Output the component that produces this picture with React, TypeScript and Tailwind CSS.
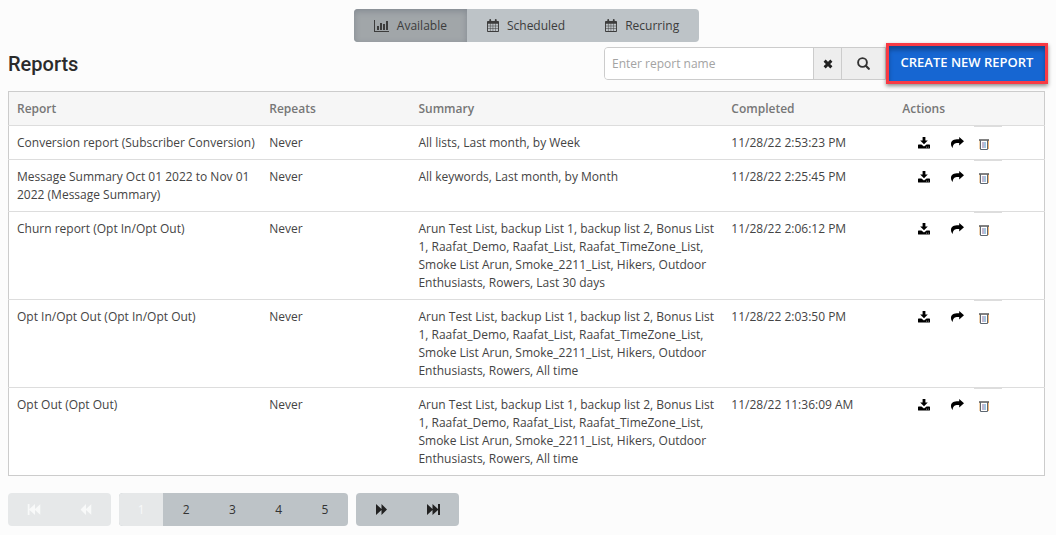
import { useState } from "react";
import type { ReactNode } from "react";
import clsx from "clsx";

interface Report {
  name: string;
  repeats: string;
  summary: string;
  completed: string;
}

const LISTS =
  "Arun Test List, backup List 1, backup list 2, Bonus List 1, Raafat_Demo, Raafat_List, Raafat_TimeZone_List, Smoke List Arun, Smoke_2211_List, Hikers, Outdoor Enthusiasts, Rowers";

const REPORTS: Report[] = [
  { name: "Conversion report (Subscriber Conversion)", repeats: "Never", summary: "All lists, Last month, by Week", completed: "11/28/22 2:53:23 PM" },
  { name: "Message Summary Oct 01 2022 to Nov 01 2022 (Message Summary)", repeats: "Never", summary: "All keywords, Last month, by Month", completed: "11/28/22 2:25:45 PM" },
  { name: "Churn report (Opt In/Opt Out)", repeats: "Never", summary: `${LISTS}, Last 30 days`, completed: "11/28/22 2:06:12 PM" },
  { name: "Opt In/Opt Out (Opt In/Opt Out)", repeats: "Never", summary: `${LISTS}, All time`, completed: "11/28/22 2:03:50 PM" },
  { name: "Opt Out (Opt Out)", repeats: "Never", summary: `${LISTS}, All time`, completed: "11/28/22 11:36:09 AM" },
];

const COLUMNS = [
  { label: "Report", width: "w-[24.4%]" },
  { label: "Repeats", width: "w-[14.4%]" },
  { label: "Summary", width: "w-[30.2%]" },
  { label: "Completed", width: "w-[16.5%]" },
  { label: "Actions", width: "w-[14.5%]" },
];

function ChartIcon() {
  return (
    <svg viewBox="0 0 15 12" className="h-3 w-[15px]" fill="currentColor" aria-hidden="true">
      <path d="M0 0h1v11h14v1H0zM3 6h2v4H3zM6 3h2v7H6zM9 4h2v6H9zM12 1h2v9h-2z" />
    </svg>
  );
}

function CalendarIcon() {
  return (
    <svg viewBox="0 0 13 14" className="h-[13px] w-3" aria-hidden="true">
      <path
        fill="currentColor"
        fillRule="evenodd"
        d="M2.5 2V1a1 1 0 0 1 2 0v1h4V1a1 1 0 0 1 2 0v1H12a1 1 0 0 1 1 1v10a1 1 0 0 1-1 1H1a1 1 0 0 1-1-1V3a1 1 0 0 1 1-1zM1 5.2v2h2.2v-2zm2.7 0v2h2.5v-2zm3 0v2h2.5v-2zm3 0v2H12v-2zM1 7.8v2.4h2.2V7.8zm2.7 0v2.4h2.5V7.8zm3 0v2.4h2.5V7.8zm3 0v2.4H12V7.8zM1 10.8V13h2.2v-2.2zm2.7 0V13h2.5v-2.2zm3 0V13h2.5v-2.2zm3 0V13H12v-2.2z"
      />
    </svg>
  );
}

function ClearIcon() {
  return (
    <svg viewBox="0 0 10 10" className="h-[10px] w-[10px]" aria-hidden="true">
      <path d="M1.6 1.6l6.8 6.8M8.4 1.6L1.6 8.4" stroke="currentColor" strokeWidth="2.9" />
    </svg>
  );
}

function SearchIcon() {
  return (
    <svg viewBox="0 0 13 13" className="h-[13px] w-[13px]" fill="none" stroke="currentColor" aria-hidden="true">
      <circle cx="5.5" cy="5.5" r="4.4" strokeWidth="1.9" />
      <path d="M8.8 8.8l3 3" strokeWidth="2.2" strokeLinecap="round" />
    </svg>
  );
}

function DownloadIcon() {
  return (
    <svg viewBox="0 0 12 12" className="h-3 w-3" fill="currentColor" aria-hidden="true">
      <path d="M4.6 0h2.8v3.4h2.4L6 7.2 2.2 3.4h2.4z" />
      <path fillRule="evenodd" d="M.6 7.6h2.8L6 9.6l2.6-2h2.8a.6.6 0 0 1 .6.6v2.7a.6.6 0 0 1-.6.6H.6a.6.6 0 0 1-.6-.6V8.2a.6.6 0 0 1 .6-.6zM8.3 9.8v.6h.7v-.6zm1.6 0v.6h.7v-.6z" />
    </svg>
  );
}

function ShareIcon() {
  return (
    <svg viewBox="0 0 13 11" className="h-[11px] w-[13px]" fill="currentColor" aria-hidden="true">
      <path d="M8.2 0L13 4.2 8.2 8.4V6.1C4.5 5.8 1.9 6.4 1.7 11 .2 9.2 0 8 0 6.8 0 3.2 3 2.1 8.2 2.2z" />
    </svg>
  );
}

function TrashIcon() {
  return (
    <svg viewBox="0 0 10 11" className="h-[11px] w-[10px]" fill="none" aria-hidden="true">
      <path d="M.5 1v9" stroke="#f0d4b0" />
      <path d="M9.5 1v9" stroke="#f0b878" />
      <path d="M0 1h10" stroke="#4d4d4d" strokeWidth="1.4" />
      <path d="M1.5 1v9.5h7V1" stroke="#5d6670" />
      <path d="M4 3v6" stroke="#8a6f9e" />
      <path d="M6 3v6" stroke="#4b8fc4" />
    </svg>
  );
}

function ForwardIcon() {
  return (
    <svg viewBox="0 0 11 11" className="h-[11px] w-[11px]" fill="currentColor" aria-hidden="true">
      <path d="M0 0l5.5 5V0L11 5.500 5.500 11V6L0 11z" />
    </svg>
  );
}

function FastForwardIcon() {
  return (
    <svg viewBox="0 0 13 11" className="h-[11px] w-[13px]" fill="currentColor" aria-hidden="true">
      <path d="M0 0l5.500 5V0L11 5V0h2v11h-2V6l-5.500 5V6L0 11z" />
    </svg>
  );
}

const TABS: { label: string; icon: ReactNode }[] = [
  { label: "Available", icon: <ChartIcon /> },
  { label: "Scheduled", icon: <CalendarIcon /> },
  { label: "Recurring", icon: <CalendarIcon /> },
];

export default function App() {
  const [tab, setTab] = useState("Available");
  const [query, setQuery] = useState("");
  const [page, setPage] = useState(1);

  const atStart = page === 1;
  const moveButton = "flex w-[51px] grow items-center justify-center";

  return (
    <div className="min-h-screen bg-[#fcfcfc] pb-2 pl-2 font-['Open_Sans',sans-serif] text-xs leading-[18px] text-[#444]">
      <nav className="flex justify-center pt-[9px] pr-[11px]">
        <div className="flex h-[33px] overflow-hidden rounded bg-[#bdc3c7]">
          {TABS.map(({ label, icon }) => (
            <button
              key={label}
              type="button"
              onClick={() => setTab(label)}
              className={clsx(
                "flex items-center gap-2 px-5 text-[#3c3c3c]",
                tab === label && "bg-[#a1a6a9] shadow-[inset_0_2px_6px_rgba(60,70,90,0.3)]"
              )}
            >
              {icon}
              {label}
            </button>
          ))}
        </div>
      </nav>

      <header className="mt-px mb-[7px] flex items-center pr-2">
        <h1 className="grow font-['Roboto',sans-serif] text-xl leading-[30px] font-medium text-[#2b2b2b]">Reports</h1>
        <div className="flex h-[33px] w-[282px] overflow-hidden rounded-l border border-[#ccc] bg-[#eee]">
          <input
            type="text"
            aria-label="Report name"
            placeholder="Enter report name"
            value={query}
            onChange={(e) => setQuery(e.target.value)}
            className="min-w-0 grow bg-white px-[7px] outline-none placeholder:text-[#a3a3a3]"
          />
          <button type="button" aria-label="Clear" onClick={() => setQuery("")} className="flex w-7 items-center justify-center border-l border-[#ccc] text-[#222]">
            <ClearIcon />
          </button>
          <button type="button" aria-label="Search" className="flex w-11 items-center justify-center border-l border-[#ccc] text-[#333]">
            <SearchIcon />
          </button>
        </div>
        <button
          type="button"
          className="h-[41px] w-[162px] border-3 border-[#f83a44] bg-[#1666d2] pb-1 text-[13px] font-semibold whitespace-nowrap text-white shadow-[0_2px_4px_rgba(0,0,0,0.45),inset_0_4px_4px_rgba(0,0,0,0.3)]"
        >
          CREATE NEW REPORT
        </button>
      </header>

      <main className="pr-[11px]">
        <table className="w-full table-fixed border-collapse border border-[#ccc] bg-white">
          <thead>
            <tr className="h-[34px] bg-[#f6f6f6] text-left text-[#777]">
              {COLUMNS.map((col) => (
                <th key={col.label} scope="col" className={clsx("pl-2 font-semibold", col.width)}>
                  {col.label}
                </th>
              ))}
            </tr>
          </thead>
          <tbody>
            {REPORTS.map((report) => (
              <tr key={report.completed} className="border-t border-[#ddd] align-top">
                <td className="pt-2 pb-[7px] pl-2">{report.name}</td>
                <td className="pt-2 pb-[7px] pl-2">{report.repeats}</td>
                <td className="pt-2 pb-[7px] pl-2">{report.summary}</td>
                <td className="pt-2 pb-[7px] pl-2">{report.completed}</td>
                <td className="pl-6">
                  <div className="flex h-[33px] text-black">
                    <button type="button" aria-label="Download" className="flex w-3 items-center">
                      <DownloadIcon />
                    </button>
                    <button type="button" aria-label="Share" className="ml-[21px] flex w-[13px] items-center">
                      <ShareIcon />
                    </button>
                    <button type="button" aria-label="Delete" className="ml-[10px] flex w-7 items-center border-t border-[#ddd] pt-[2px] pl-[5px]">
                      <TrashIcon />
                    </button>
                  </div>
                </td>
              </tr>
            ))}
          </tbody>
        </table>

        <nav aria-label="Pages" className="mt-[17px] flex h-[33px] gap-2 text-[#333]">
          <div className={clsx("flex w-[103px] overflow-hidden rounded", atStart ? "bg-[#e6e8e9] text-[#f8f9f9]" : "bg-[#bdc3c7]")}>
            <button type="button" aria-label="First page" disabled={atStart} onClick={() => setPage(1)} className={clsx(moveButton, "rotate-180")}>
              <FastForwardIcon />
            </button>
            <button type="button" aria-label="Previous page" disabled={atStart} onClick={() => setPage(page - 1)} className={clsx(moveButton, "rotate-180")}>
              <ForwardIcon />
            </button>
          </div>
          <div className="flex w-[229px] overflow-hidden rounded bg-[#bdc3c7]">
            {[1, 2, 3, 4, 5].map((n) => (
              <button
                key={n}
                type="button"
                disabled={n === page}
                onClick={() => setPage(n)}
                className={clsx("grow", n === page ? "w-[42px] bg-[#e6e8e9] text-[#f8f9f9]" : "w-11")}
              >
                {n}
              </button>
            ))}
          </div>
          <div className="flex w-[103px] overflow-hidden rounded bg-[#bdc3c7] text-[#222]">
            <button type="button" aria-label="Next page" disabled={page === 5} onClick={() => setPage(page + 1)} className={moveButton}>
              <ForwardIcon />
            </button>
            <button type="button" aria-label="Last page" disabled={page === 5} onClick={() => setPage(5)} className={moveButton}>
              <FastForwardIcon />
            </button>
          </div>
        </nav>
      </main>
    </div>
  );
}
